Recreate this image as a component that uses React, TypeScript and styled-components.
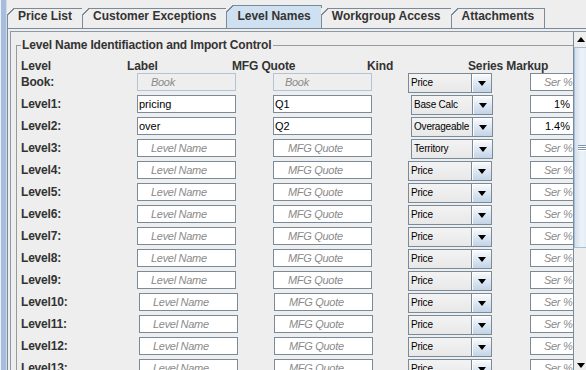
import styled, { createGlobalStyle } from "styled-components";

const GlobalStyle = createGlobalStyle`
  html, body {
    margin: 0;
    padding: 0;
    background: #eeeeee;
    overflow: hidden;
  }
  body {
    font-family: "Liberation Sans", Arial, sans-serif;
  }
`;

const palette = {
  bg: "#eeeeee",
  line: "#7a8a99",
  text: "#333333",
  hint: "#8a8a8a",
  tabOn: "#cfe0f1",
};

const Window = styled.div`
  display: flex;
  width: 600px;
  height: 380px;
  background: ${palette.bg};
`;

const LeftEdge = styled.div`
  flex: none;
  width: 7px;
  background: linear-gradient(
    90deg,
    #e9f0f8 0 1px,
    #a7bddb 1px 6px,
    #cfdbea 6px 7px
  );
`;

const Main = styled.div`
  flex: 1;
  min-width: 0;
  display: flex;
  flex-direction: column;
`;

const TabBar = styled.div`
  display: flex;
  align-items: flex-end;
  height: 28px;
  border-bottom: 1px solid ${palette.line};
`;

const Tab = styled.div<{ $active?: boolean }>`
  position: relative;
  box-sizing: border-box;
  height: ${(p) => (p.$active ? 23 : 20)}px;
  padding: ${(p) => (p.$active ? 3 : 0)}px 10px 0 10px;
  margin-left: -1px;
  border: 1px solid ${palette.line};
  border-bottom: none;
  background: ${(p) => (p.$active ? palette.tabOn : palette.bg)};
  font-size: 12px;
  font-weight: bold;
  line-height: 14px;
  color: ${palette.text};
  white-space: nowrap;

  &:first-child {
    margin-left: 0;
  }

  /* slanted top-left corner */
  &::before {
    content: "";
    position: absolute;
    top: -1px;
    left: -1px;
    width: 7px;
    height: 7px;
    background: linear-gradient(
      135deg,
      ${palette.bg} 0 48%,
      ${palette.line} 48% 62%,
      transparent 62%
    );
  }
`;

const Panel = styled.div`
  flex: 1;
  border-left: 1px solid ${palette.line};
  padding: 2px 0 0 2px;
`;

const ScrollPane = styled.div`
  display: flex;
  box-sizing: border-box;
  width: 581px;
  height: 344px;
  border: 1px solid #8e99a6;
`;

const Viewport = styled.div`
  flex: none;
  width: 562px;
  overflow: hidden;
  padding: 6px 0 0 5px;
  box-sizing: border-box;
`;

const Group = styled.fieldset`
  margin: 0;
  width: 620px;
  min-width: 0;
  padding: 7px 0 40px 4px;
  border: 1px solid #9a9a9a;
`;

const Legend = styled.legend`
  padding: 0 2px 0 1px;
  font-size: 12px;
  font-weight: bold;
  line-height: 14px;
  letter-spacing: -0.15px;
  color: ${palette.text};
`;

const HeaderRow = styled.div`
  display: grid;
  grid-template-columns: 106px 105px 135px 101px auto;
  height: 14px;
  font-size: 12px;
  font-weight: bold;
  line-height: 14px;
  letter-spacing: -0.15px;
  color: ${palette.text};
`;

const Rows = styled.div`
  display: flex;
  flex-direction: column;
  gap: 4px;
`;

const Row = styled.div`
  display: grid;
  grid-template-columns: 116px 136px 135px 122px 1fr;
  align-items: start;
  height: 18px;
`;

const LevelLabel = styled.span`
  font-size: 12px;
  font-weight: bold;
  line-height: 18px;
  letter-spacing: -0.2px;
  color: ${palette.text};
  white-space: nowrap;
`;

const Field = styled.input<{
  $width?: number;
  $shift?: number;
  $indent?: number;
  $right?: boolean;
  $off?: boolean;
}>`
  box-sizing: border-box;
  width: ${(p) => p.$width ?? 99}px;
  height: 18px;
  margin: 0 0 0 ${(p) => p.$shift ?? 0}px;
  padding: 0 ${(p) => (p.$right ? 4 : 1)}px 0 ${(p) => p.$indent ?? 1}px;
  border: 1px solid ${(p) => (p.$off ? "#b4c4d4" : palette.line)};
  border-radius: 0;
  background: ${(p) => (p.$off ? palette.bg : "#ffffff")};
  font-family: "Liberation Sans", Arial, sans-serif;
  font-size: 11px;
  color: #000;
  text-align: ${(p) => (p.$right ? "right" : "left")};
  outline: none;

  &::placeholder {
    font-style: italic;
    letter-spacing: -0.3px;
    color: ${palette.hint};
  }
`;

const Combo = styled.div<{ $inset?: boolean }>`
  display: flex;
  box-sizing: border-box;
  width: ${(p) => (p.$inset ? 82 : 84)}px;
  height: 20px;
  margin-left: ${(p) => (p.$inset ? 3 : 0)}px;
  border: 1px solid ${palette.line};
  background: linear-gradient(#f3f3f3, #e8e8e8);
`;

const ComboText = styled.span`
  flex: 1;
  padding-left: 2px;
  font-size: 10px;
  line-height: 18px;
  letter-spacing: -0.2px;
  color: #000;
  white-space: nowrap;
  overflow: hidden;
`;

const ComboButton = styled.span`
  flex: none;
  width: 19px;
  display: flex;
  align-items: center;
  justify-content: center;
  border-left: 1px solid ${palette.line};
  background: linear-gradient(#fbfcfe, #dbe6f1 55%, #c2d4e7);
  box-shadow: inset 1px 1px 0 #ffffff;
`;

const Arrow = styled.span<{ $up?: boolean }>`
  width: 0;
  height: 0;
  border-left: 4.5px solid transparent;
  border-right: 4.5px solid transparent;
  ${(p) =>
    p.$up ? "border-bottom: 5px solid #000;" : "border-top: 5px solid #000;"}
`;

const ScrollBar = styled.div`
  flex: none;
  width: 16px;
  display: flex;
  flex-direction: column;
  border-left: 1px solid ${palette.line};
  background: ${palette.bg};
`;

const ScrollButton = styled.div<{ $h: number }>`
  flex: none;
  height: ${(p) => p.$h}px;
  display: flex;
  align-items: center;
  justify-content: center;
  padding-right: 2px;
  box-sizing: border-box;
`;

const Thumb = styled.div`
  flex: none;
  height: 201px;
  display: flex;
  align-items: center;
  padding-left: 3px;
  box-sizing: border-box;
  border: 1px solid #a9bdd2;
  border-right: none;
  background: linear-gradient(90deg, #d3e0ee, #eef3f9 45%, #dbe6f2);
`;

const Grip = styled.div`
  width: 10px;
  height: 6px;
  background: repeating-linear-gradient(
    #8095ab 0 1px,
    #ffffff 1px 2px
  );
`;

const Track = styled.div`
  flex: 1;
`;

type Level = {
  name: string;
  label?: string;
  mfg?: string;
  kind: string;
  series?: string;
  off?: boolean;
};

const levels: Level[] = [
  { name: "Book:", kind: "Price", off: true },
  { name: "Level1:", label: "pricing", mfg: "Q1", kind: "Base Calc", series: "1%" },
  { name: "Level2:", label: "over", mfg: "Q2", kind: "Overageable", series: "1.4%" },
  { name: "Level3:", kind: "Territory" },
  ...Array.from({ length: 12 }, (_, i) => ({
    name: `Level${i + 4}:`,
    kind: "Price",
  })),
];

const tabs = [
  "Price List",
  "Customer Exceptions",
  "Level Names",
  "Workgroup Access",
  "Attachments",
];

const LevelRow = ({ level, index }: { level: Level; index: number }) => {
  const wide = index >= 10;
  const book = level.off;
  return (
    <Row>
      <LevelLabel>{level.name}</LevelLabel>
      <Field
        readOnly
        $off={book}
        $shift={wide ? 2 : 0}
        $indent={level.label ? 1 : 13}
        defaultValue={level.label ?? ""}
        placeholder={book ? "Book" : "Level Name"}
      />
      <Field
        readOnly
        $off={book}
        $shift={wide ? 1 : 0}
        $indent={level.mfg ? 1 : book ? 11 : 14}
        defaultValue={level.mfg ?? ""}
        placeholder={book ? "Book" : "MFG Quote"}
      />
      <Combo $inset={level.kind !== "Price"}>
        <ComboText>{level.kind}</ComboText>
        <ComboButton>
          <Arrow />
        </ComboButton>
      </Combo>
      <Field
        readOnly
        $width={45}
        $right={!!level.series}
        $indent={level.series ? 1 : 13}
        defaultValue={level.series ?? ""}
        placeholder="Ser %"
      />
    </Row>
  );
};

const App = () => {
  return (
    <>
      <GlobalStyle />
      <Window>
        <LeftEdge />
        <Main>
          <TabBar>
            {tabs.map((t) => (
              <Tab key={t} $active={t === "Level Names"}>
                {t}
              </Tab>
            ))}
          </TabBar>
          <Panel>
            <ScrollPane>
              <Viewport>
                <Group>
                  <Legend>Level Name Identifiaction and Import Control</Legend>
                  <HeaderRow>
                    <span>Level</span>
                    <span>Label</span>
                    <span>MFG Quote</span>
                    <span>Kind</span>
                    <span>Series Markup</span>
                  </HeaderRow>
                  <Rows>
                    {levels.map((l, i) => (
                      <LevelRow key={l.name} level={l} index={i} />
                    ))}
                  </Rows>
                </Group>
              </Viewport>
              <ScrollBar>
                <ScrollButton $h={15}>
                  <Arrow $up />
                </ScrollButton>
                <Thumb>
                  <Grip />
                </Thumb>
                <Track />
                <ScrollButton $h={17}>
                  <Arrow />
                </ScrollButton>
              </ScrollBar>
            </ScrollPane>
          </Panel>
        </Main>
      </Window>
    </>
  );
};

export default App;
